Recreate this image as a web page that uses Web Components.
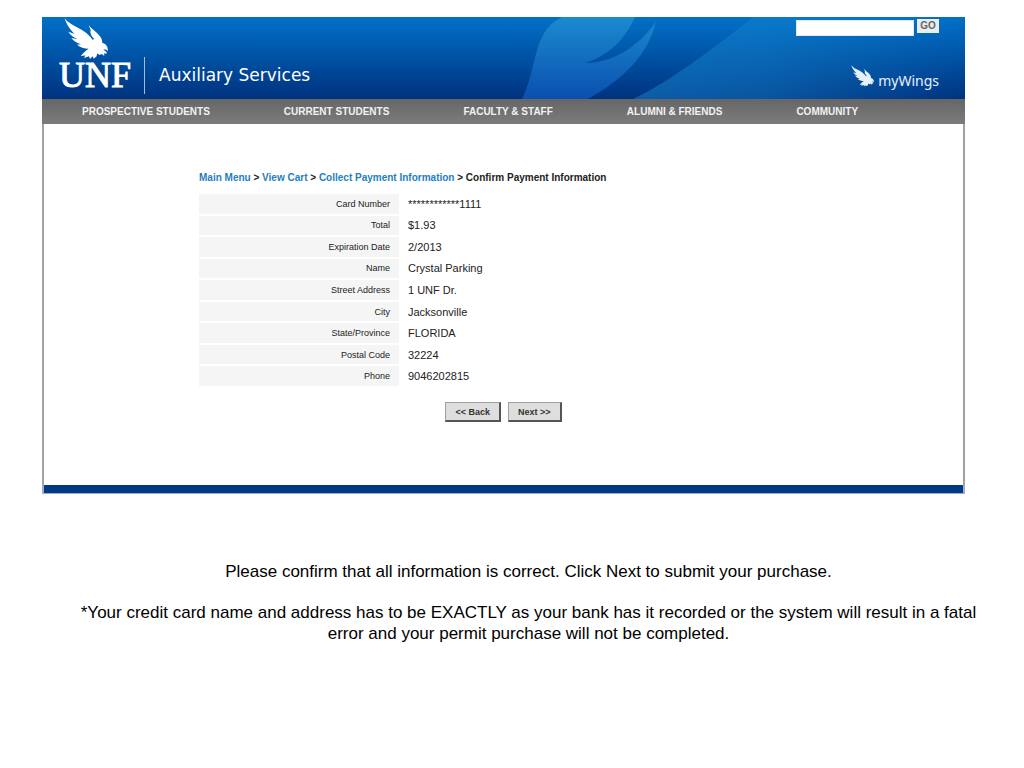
<!DOCTYPE html>
<html lang="en">
<head>
<meta charset="utf-8">
<meta name="viewport" content="width=device-width, initial-scale=1">
<title>Auxiliary Services - Confirm Payment Information</title>
<style>
  body {
    margin: 0;
    padding: 17px 59px 40px 42px;
    background: #fff;
    color: #000;
    font-family: "Liberation Sans", Arial, sans-serif;
  }
</style>
</head>
<body>

<unf-panel>
  <unf-header slot="header" heading="Auxiliary Services"></unf-header>
  <unf-nav slot="nav" items="PROSPECTIVE STUDENTS|CURRENT STUDENTS|FACULTY &amp; STAFF|ALUMNI &amp; FRIENDS|COMMUNITY"></unf-nav>
  <unf-crumbs items="Main Menu|View Cart|Collect Payment Information|Confirm Payment Information"></unf-crumbs>
  <payment-details></payment-details>
  <form-actions></form-actions>
</unf-panel>

<help-note>
  <p>Please confirm that all information is correct. Click Next to submit your purchase.</p>
  <p>*Your credit card name and address has to be EXACTLY as your bank has it recorded or the system will result in a fatal error and your permit purchase will not be completed.</p>
</help-note>

<script>
class OspreyMark extends HTMLElement {
  constructor() {
    super();
    this.attachShadow({ mode: 'open' });
    this.shadowRoot.innerHTML = `
      <style>
        :host { display: block; width: 46px; height: 42px; }
        svg { display: block; width: 100%; height: 100%; fill: currentColor; }
      </style>
      <svg viewBox="0 0 138 126" aria-hidden="true">
        <path d="M2 1 C10 12 24 21 42 29 C60 38 76 50 86 65 L91 63
          C82 55 77 45 80 36 L74 22
          C84 34 96 41 104 50 C112 58 115 66 115 75
          C125 77 132 85 132 99 C127 95 122 94 118 95
          L128 102 L127 108 L120 106 L121 114 L113 108 L106 111 L102 107
          L99 107 L98 115 L89 122 L86 115 L78 123 L75 115 L60 120 L64 112
          L50 115 C57 105 65 98 74 92 C61 92 48 88 39 80
          L51 79 C39 75 28 69 22 60 L41 64
          C29 58 18 50 13 41 L32 48
          C20 37 7 20 2 1 Z"/>
      </svg>
    `;
  }
}

class UnfHeader extends HTMLElement {
  connectedCallback() {
    this.attachShadow({ mode: 'open' });
    this.shadowRoot.innerHTML = `
      <style>
        :host {
          display: flex;
          justify-content: space-between;
          position: relative;
          height: 82px;
          color: #fff;
          background: linear-gradient(#0071c8, #00327f);
        }
        .swoosh {
          position: absolute;
          inset: 0;
          width: 100%;
          height: 100%;
        }
        .brand, .tools { position: relative; display: flex; }
        .brand { align-items: flex-end; padding: 0 0 5px 17px; }
        .logo {
          padding-bottom: 4px;
          color: #fff;
          text-decoration: none;
          font: 36px/30px "Liberation Serif", "Times New Roman", serif;
          -webkit-text-stroke: 1px #fff;
        }
        .logo osprey-mark { margin-left: 5px; }
        .heading {
          margin: 0 0 0 13px;
          padding-left: 14px;
          border-left: 1px solid #9dbde2;
          font: 17px/37px "DejaVu Sans", Verdana, sans-serif;
        }
        .tools {
          flex-direction: column;
          align-items: flex-end;
          justify-content: space-between;
          padding: 1px 26px 8px 0;
        }
        form { display: flex; gap: 3px; }
        input {
          box-sizing: border-box;
          width: 118px;
          height: 16px;
          margin: 2px 0 0;
          padding: 0 2px;
          border: 1px solid #dcebf5;
          background: #fff;
          font: 10px "Liberation Sans", Arial, sans-serif;
        }
        button {
          width: 22px;
          height: 14px;
          margin-top: 1px;
          padding: 0;
          border: 0;
          background: #e9edf0;
          color: #666;
          font: bold 10px/14px "Liberation Sans", Arial, sans-serif;
        }
        .wings {
          display: flex;
          align-items: flex-end;
          gap: 3px;
          color: #e6f1fb;
          text-decoration: none;
          font: 14px/20px "Noto Sans", sans-serif;
        }
        .wings osprey-mark { width: 24px; height: 22px; margin-bottom: 4px; }
      </style>
      <svg class="swoosh" viewBox="0 0 923 82" preserveAspectRatio="xMaxYMid slice" aria-hidden="true">
        <defs>
          <linearGradient id="leaf" x1="0" y1="0" x2="0" y2="1">
            <stop offset="0" stop-color="#1b8bd0"/>
            <stop offset="1" stop-color="#0a4fae"/>
          </linearGradient>
          <linearGradient id="fade" x1="0" y1="0" x2="1" y2="0">
            <stop offset="0" stop-color="#1787d0" stop-opacity=".5"/>
            <stop offset=".4" stop-color="#1787d0" stop-opacity=".4"/>
            <stop offset="1" stop-color="#1787d0" stop-opacity="0"/>
          </linearGradient>
        </defs>
        <path fill="url(#leaf)" d="M480 82 C496 50 490 14 520 0 H593 C583 22 568 38 543 46 C576 46 600 24 614 5 C606 36 585 60 546 82 Z"/>
        <path fill="url(#fade)" d="M591 82 C640 58 676 26 712 0 H923 V82 Z"/>
      </svg>
      <div class="brand">
        <a class="logo" href="#"><osprey-mark></osprey-mark>UNF</a>
        <h1 class="heading">${this.getAttribute('heading')}</h1>
      </div>
      <div class="tools">
        <form>
          <input type="text" aria-label="Search">
          <button type="button">GO</button>
        </form>
        <a class="wings" href="#"><osprey-mark></osprey-mark>myWings</a>
      </div>
    `;
  }
}

class UnfNav extends HTMLElement {
  connectedCallback() {
    const links = this.getAttribute('items').split('|')
      .map(t => `<a href="#">${t.replace('&', '&amp;')}</a>`).join('');
    this.attachShadow({ mode: 'open' });
    this.shadowRoot.innerHTML = `
      <style>
        :host {
          display: block;
          background: linear-gradient(#666, #7c7c7c);
        }
        nav { display: flex; flex-wrap: wrap; column-gap: 74px; padding: 1px 40px 0; }
        a {
          color: #f2f2f2;
          font-size: 10px;
          font-weight: bold;
          line-height: 24px;
          text-decoration: none;
        }
      </style>
      <nav>${links}</nav>
    `;
  }
}

class UnfPanel extends HTMLElement {
  constructor() {
    super();
    this.attachShadow({ mode: 'open' });
    this.shadowRoot.innerHTML = `
      <style>
        :host { display: block; }
        .content {
          padding: 46px 155px 63px;
          border: solid #a2a2a2;
          border-width: 0 2px;
        }
        .bar {
          height: 8px;
          background: #003a80;
          border: solid #a4a9d8;
          border-width: 0 2px 1px 2px;
        }
      </style>
      <slot name="header"></slot>
      <slot name="nav"></slot>
      <div class="content"><slot></slot></div>
      <div class="bar"></div>
    `;
  }
}

class UnfCrumbs extends HTMLElement {
  connectedCallback() {
    const items = this.getAttribute('items').split('|');
    const last = items.pop();
    this.attachShadow({ mode: 'open' });
    this.shadowRoot.innerHTML = `
      <style>
        :host { display: block; color: #222; font-size: 10px; font-weight: bold; line-height: 16px; }
        a { color: #1f80bd; text-decoration: none; }
      </style>
      <nav aria-label="Breadcrumb">${items.map(t => `<a href="#">${t}</a> &gt; `).join('')}${last}</nav>
    `;
  }
}

class PaymentDetails extends HTMLElement {
  connectedCallback() {
    const rows = [
      ['Card Number', '************1111'],
      ['Total', '$1.93'],
      ['Expiration Date', '2/2013'],
      ['Name', 'Crystal Parking'],
      ['Street Address', '1 UNF Dr.'],
      ['City', 'Jacksonville'],
      ['State/Province', 'FLORIDA'],
      ['Postal Code', '32224'],
      ['Phone', '9046202815']
    ];
    this.attachShadow({ mode: 'open' });
    this.shadowRoot.innerHTML = `
      <style>
        :host { display: block; margin-top: 6px; }
        table { width: 100%; height: 196px; border-spacing: 0 2px; }
        th, td { padding: 0; line-height: 16px; }
        th {
          width: 191px;
          padding-right: 9px;
          background: #f5f5f5;
          color: #222;
          font-size: 9px;
          font-weight: normal;
          text-align: right;
        }
        td { padding-left: 9px; color: #222; font-size: 11px; }
      </style>
      <table>
        ${rows.map(r => `<tr><th scope="row">${r[0]}</th><td>${r[1]}</td></tr>`).join('')}
      </table>
    `;
  }
}

class FormActions extends HTMLElement {
  constructor() {
    super();
    this.attachShadow({ mode: 'open' });
    this.shadowRoot.innerHTML = `
      <style>
        :host { display: flex; justify-content: center; gap: 7px; margin-top: 14px; }
        button {
          height: 20px;
          padding: 0 9px;
          border: 2px solid;
          border-color: #a0a0a0 #555 #555 #a0a0a0;
          border-width: 1px 2px 2px 1px;
          background: #dedede;
          color: #333;
          font: bold 9px/16px "Liberation Sans", Arial, sans-serif;
        }
      </style>
      <button type="button">&lt;&lt; Back</button>
      <button type="button">Next &gt;&gt;</button>
    `;
  }
}

class HelpNote extends HTMLElement {
  constructor() {
    super();
    this.attachShadow({ mode: 'open' });
    this.shadowRoot.innerHTML = `
      <style>
        :host {
          display: block;
          margin: 67px -22px 0 28px;
          font-size: 17px;
          line-height: 21px;
          text-align: center;
        }
        ::slotted(p) { margin: 0 0 20px; }
      </style>
      <slot></slot>
    `;
  }
}

customElements.define('osprey-mark', OspreyMark);
customElements.define('unf-header', UnfHeader);
customElements.define('unf-nav', UnfNav);
customElements.define('unf-panel', UnfPanel);
customElements.define('unf-crumbs', UnfCrumbs);
customElements.define('payment-details', PaymentDetails);
customElements.define('form-actions', FormActions);
customElements.define('help-note', HelpNote);
</script>
</body>
</html>
